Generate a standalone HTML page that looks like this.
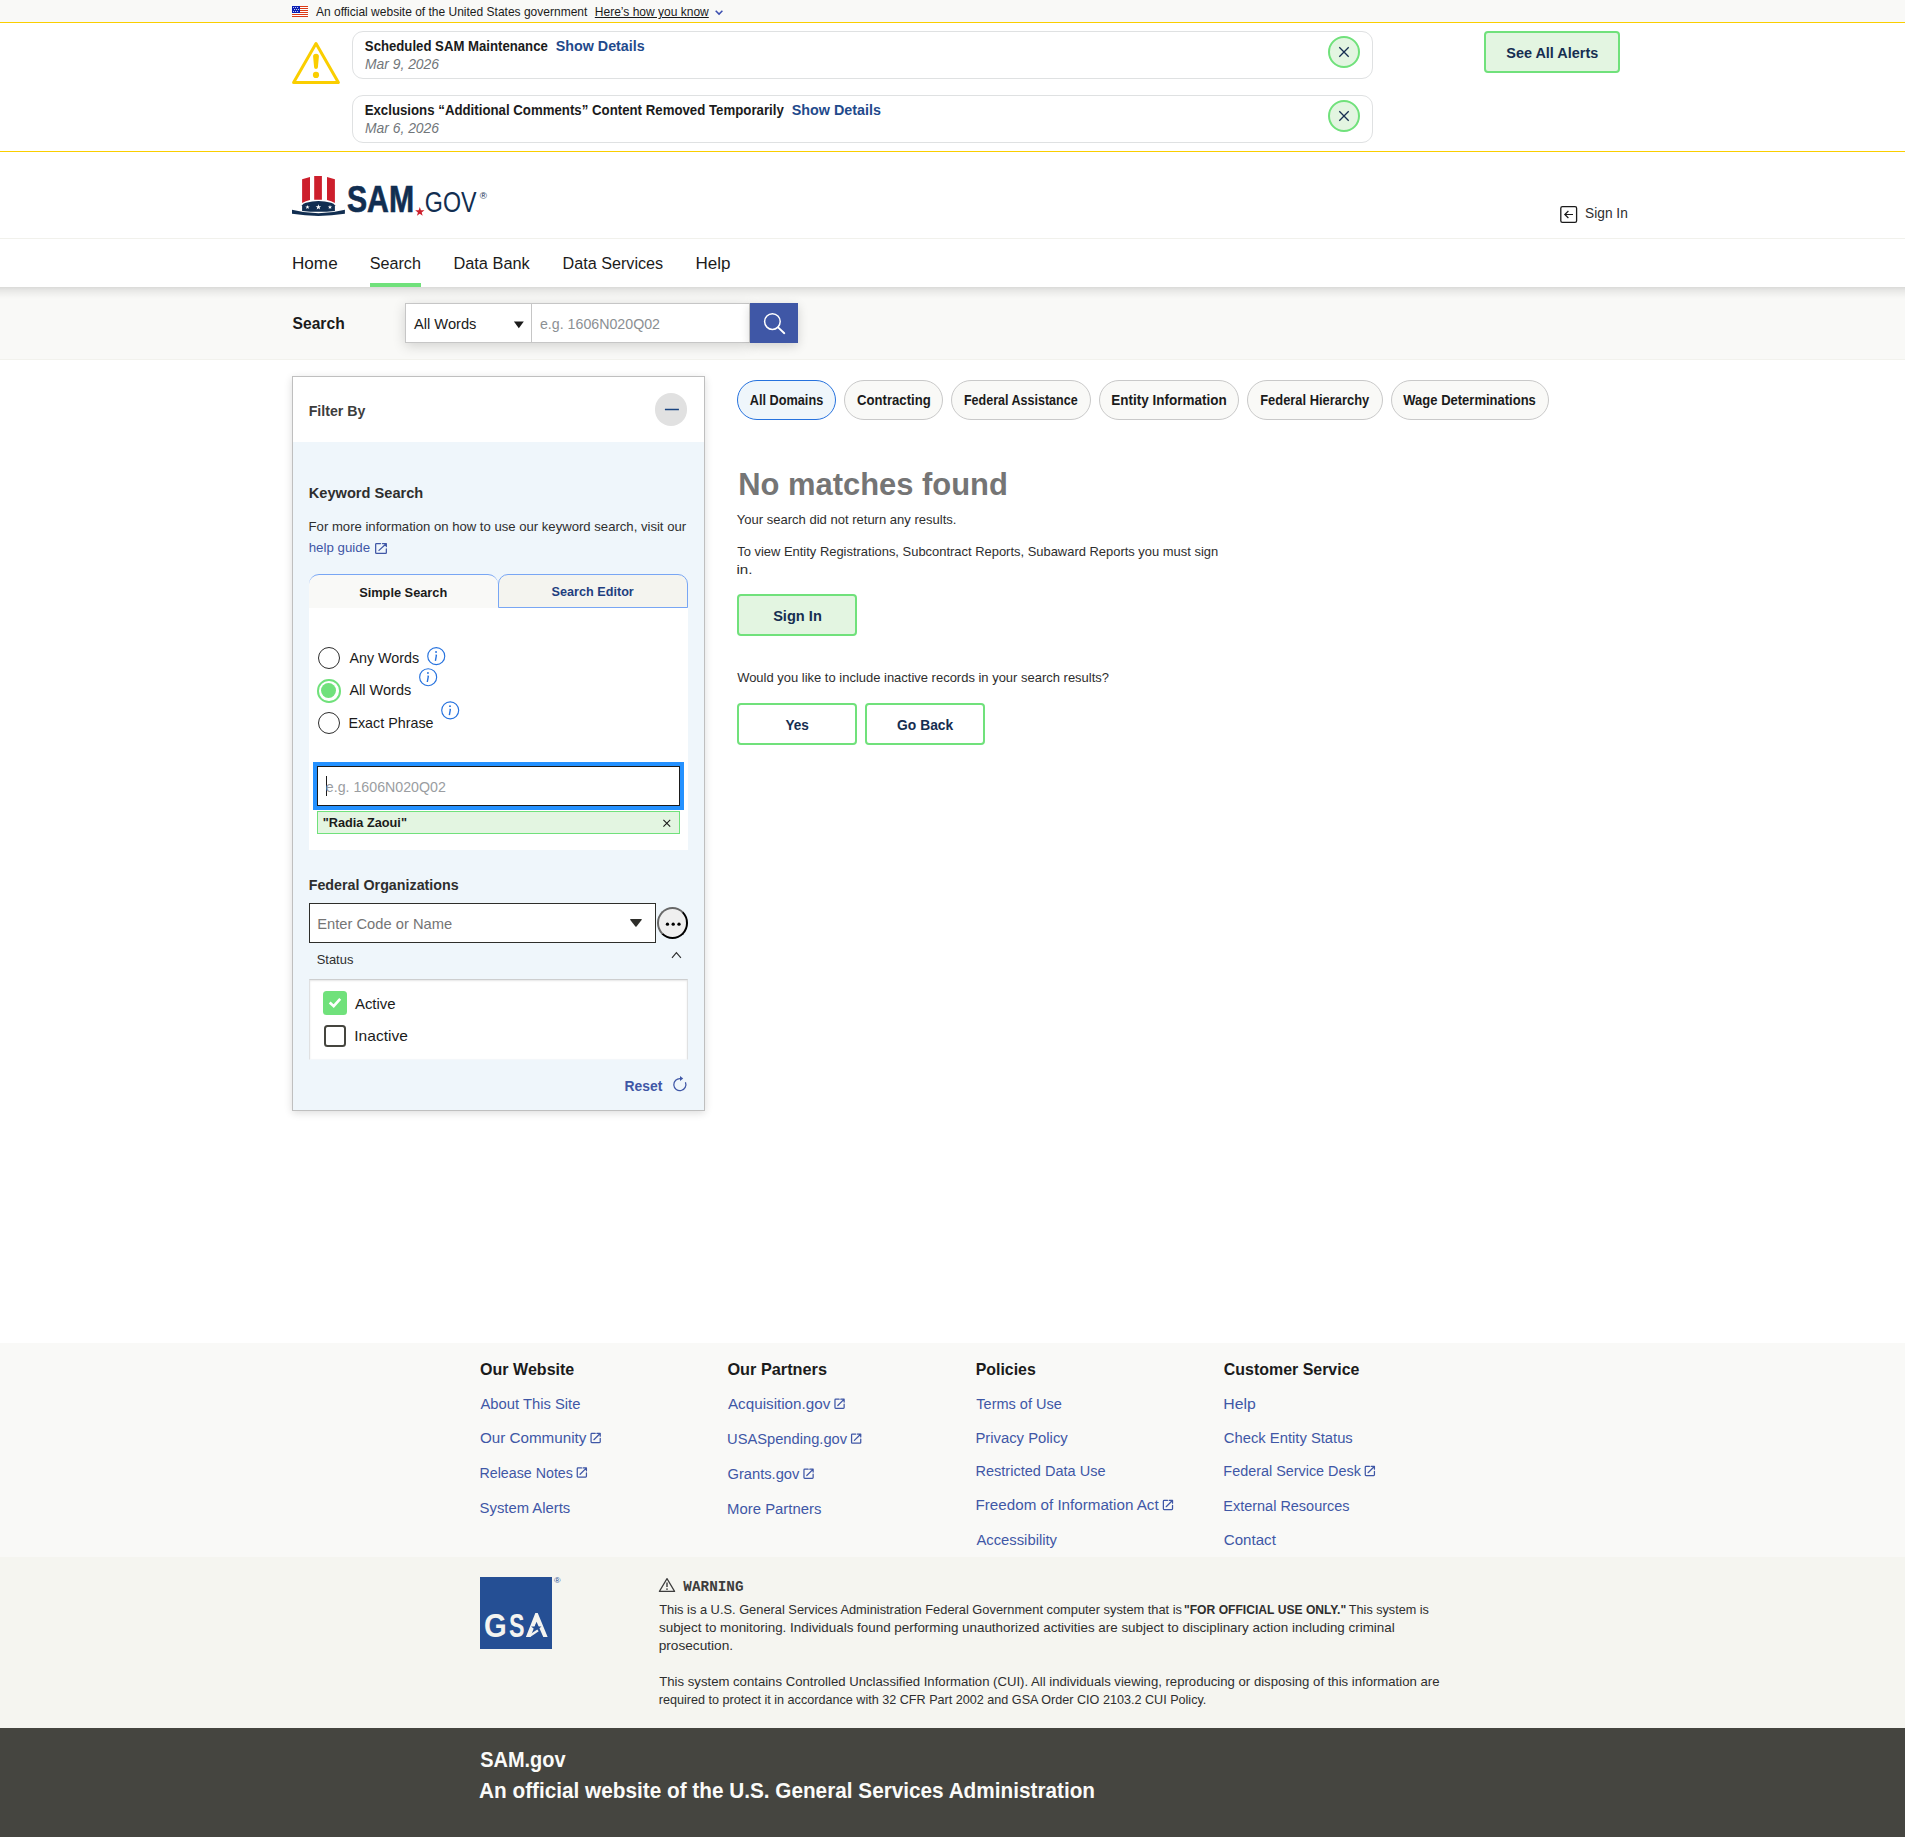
<!DOCTYPE html><html><head><meta charset="utf-8"><title>SAM.gov | Search</title><style>html,body{margin:0;padding:0}body{width:1905px;height:1837px;position:relative;overflow:hidden;background:#fff;font-family:"Liberation Sans",sans-serif;}div,svg{position:absolute;box-sizing:border-box}.t{position:absolute;white-space:nowrap;line-height:1;transform-origin:0 0;display:block;margin:0;padding:0;font-weight:normal;text-decoration:none}</style></head><body>
<div style="left:0px;top:0px;width:1905px;height:22px;background:#f9f9f7"></div>
<div style="left:0px;top:22px;width:1905px;height:1px;background:#face00"></div>
<div style="left:0px;top:151px;width:1905px;height:1px;background:#face00"></div>
<div style="left:352px;top:31px;width:1021px;height:48px;border:1px solid #dfe1e2;border-radius:11px;background:#fff"></div>
<div style="left:1328px;top:36px;width:32px;height:32px;border:2px solid #70e17b;border-radius:50%;background:#e3f5e1"></div>
<div style="left:352px;top:95px;width:1021px;height:48px;border:1px solid #dfe1e2;border-radius:11px;background:#fff"></div>
<div style="left:1328px;top:100px;width:32px;height:32px;border:2px solid #70e17b;border-radius:50%;background:#e3f5e1"></div>
<div style="left:1484px;top:31px;width:136px;height:42px;border:2px solid #70e17b;border-radius:4px;background:#e3f5e1"></div>
<div style="left:0px;top:238px;width:1905px;height:1px;background:#f1f1ec"></div>
<div style="left:370px;top:283px;width:51px;height:4px;background:#70e17b"></div>
<div style="left:0px;top:287px;width:1905px;height:72px;background:linear-gradient(rgba(0,0,0,.125),rgba(0,0,0,.075) 3px,rgba(0,0,0,.035) 7px,rgba(0,0,0,.012) 10px,rgba(0,0,0,0) 13px),#f9f9f7"></div>
<div style="left:0px;top:359px;width:1905px;height:1px;background:#f2f2ed"></div>
<div style="left:405px;top:303px;width:345px;height:40px;background:#fff;border:1px solid #c6c6c6;box-shadow:0 3px 12px rgba(0,0,0,.16)"></div>
<div style="left:531px;top:303px;width:1px;height:40px;background:#c6c6c6"></div>
<div style="left:750px;top:303px;width:48px;height:40px;background:#3f57a6;box-shadow:0 3px 10px rgba(0,0,0,.16)"></div>
<div style="left:292px;top:376px;width:413px;height:735px;border:1px solid #bfbfbf;background:#eff6fb;box-shadow:0 2px 8px rgba(0,0,0,.14)"></div>
<div style="left:293px;top:377px;width:411px;height:65px;background:#fff"></div>
<div style="left:654.7px;top:393.1px;width:32.6px;height:32.6px;border-radius:50%;background:#e1e1e1"></div>
<div style="left:309px;top:574px;width:189px;height:34px;background:#f9f9f7;border-top:1px solid #78a6f4;border-radius:10px 10px 0 0"></div>
<div style="left:498px;top:574px;width:190px;height:34px;background:#f4f4ef;border:1px solid #78a6f4;border-radius:10px 10px 0 0"></div>
<div style="left:309px;top:608px;width:379px;height:242px;background:#fff"></div>
<div style="left:318px;top:646.7px;width:22px;height:22px;border:1.5px solid #2e2e2e;border-radius:50%;background:#fff"></div>
<div style="left:317.2px;top:679px;width:23.5px;height:23.5px;border:2px solid #70e17b;border-radius:50%;background:#fff"></div>
<div style="left:321.4px;top:683.2px;width:15.1px;height:15.1px;border-radius:50%;background:#70e17b"></div>
<div style="left:318px;top:712.3px;width:22px;height:22px;border:1.5px solid #2e2e2e;border-radius:50%;background:#fff"></div>
<div style="left:313px;top:762px;width:371px;height:48px;background:#2491ff"></div>
<div style="left:317px;top:766px;width:363px;height:40px;background:#fff;border:1px solid #1b1b1b"></div>
<div style="left:326px;top:776px;width:1px;height:20px;background:#1b1b1b"></div>
<div style="left:317px;top:811px;width:363px;height:23px;background:#e3f5e1;border:1px solid #70e17b"></div>
<div style="left:309px;top:903px;width:347px;height:40px;background:#fff;border:1px solid #2e2e2a"></div>
<div style="left:657px;top:907px;width:31px;height:32px;border:2px solid;border-color:#686868 #000 #000 #686868;border-radius:50%;background:#efefef"></div>
<div style="left:309px;top:979px;width:379px;height:81px;background:#fff;border:1px solid #e0e1e2;border-top-color:#cdcecf;border-bottom-color:#f4f7fa;box-shadow:inset 0 1px 2px rgba(0,0,0,.10)"></div>
<div style="left:323px;top:991px;width:24px;height:24px;background:#70e17b;border-radius:3.5px"></div>
<div style="left:324px;top:1025px;width:22px;height:22px;border:2px solid #45453f;border-radius:3.5px;background:#fff"></div>
<div style="left:737px;top:380px;width:99px;height:40px;border:1px solid #2672de;border-radius:20px;background:#eff6fb"></div>
<div style="left:844px;top:380px;width:99px;height:40px;border:1px solid #c9c9c9;border-radius:20px;background:#f9f9f7"></div>
<div style="left:951px;top:380px;width:140px;height:40px;border:1px solid #c9c9c9;border-radius:20px;background:#f9f9f7"></div>
<div style="left:1099px;top:380px;width:140px;height:40px;border:1px solid #c9c9c9;border-radius:20px;background:#f9f9f7"></div>
<div style="left:1247.2px;top:380px;width:135.8px;height:40px;border:1px solid #c9c9c9;border-radius:20px;background:#f9f9f7"></div>
<div style="left:1391.2px;top:380px;width:157.8px;height:40px;border:1px solid #c9c9c9;border-radius:20px;background:#f9f9f7"></div>
<div style="left:737px;top:594px;width:120px;height:42px;border:2px solid #70e17b;border-radius:4px;background:#e3f5e1"></div>
<div style="left:737px;top:703px;width:120px;height:42px;border:2px solid #70e17b;border-radius:4px;background:#fff"></div>
<div style="left:865px;top:703px;width:120px;height:42px;border:2px solid #70e17b;border-radius:4px;background:#fff"></div>
<div style="left:0px;top:1343px;width:1905px;height:214px;background:#f9f9f7"></div>
<div style="left:0px;top:1557px;width:1905px;height:171px;background:#f5f5f0"></div>
<div style="left:0px;top:1728px;width:1905px;height:109px;background:#454540"></div>
<div style="left:480px;top:1577px;width:72.2px;height:72px;background:#254f94"></div>
<svg width="1905" height="1837" viewBox="0 0 1905 1837" style="left:0;top:0;overflow:visible"><rect x="292" y="6" width="16" height="11" fill="#fff"/><rect x="292" y="6" width="16" height="1" fill="#db3a16"/><rect x="292" y="8" width="16" height="1" fill="#db3a16"/><rect x="292" y="10" width="16" height="1" fill="#db3a16"/><rect x="292" y="12" width="16" height="1" fill="#db3a16"/><rect x="292" y="14" width="16" height="1" fill="#db3a16"/><rect x="292" y="16" width="16" height="1" fill="#db3a16"/><rect x="292" y="6" width="8" height="7" fill="#0b1fb4"/><circle cx="293.6" cy="7.5" r="0.55" fill="#fff"/><circle cx="295.6" cy="7.5" r="0.55" fill="#fff"/><circle cx="297.6" cy="7.5" r="0.55" fill="#fff"/><circle cx="294.6" cy="9.45" r="0.55" fill="#fff"/><circle cx="296.6" cy="9.45" r="0.55" fill="#fff"/><circle cx="298.6" cy="9.45" r="0.55" fill="#fff"/><circle cx="293.6" cy="11.45" r="0.55" fill="#fff"/><circle cx="295.6" cy="11.45" r="0.55" fill="#fff"/><circle cx="297.6" cy="11.45" r="0.55" fill="#fff"/><path d="M715.7,10.7 L719.05,14.1 L722.4,10.7" fill="none" stroke="#3c4fb0" stroke-width="1.5"/><path d="M316,43.5 L338.4,82.4 H293.6 Z" fill="none" stroke="#face00" stroke-width="3" stroke-linejoin="round"/><path d="M313.1,56.6 Q313.1,53.8 316,53.8 Q318.9,53.8 318.9,56.6 L317.9,67.3 Q317.8,69.1 316,69.1 Q314.2,69.1 314.1,67.3 Z" fill="#face00"/><circle cx="316" cy="74.9" r="3.1" fill="#face00"/><path d="M1339.3,47.3 L1348.7,56.7 M1348.7,47.3 L1339.3,56.7" stroke="#162e51" stroke-width="1.3" fill="none"/><path d="M1339.3,111.3 L1348.7,120.7 M1348.7,111.3 L1339.3,120.7" stroke="#162e51" stroke-width="1.3" fill="none"/><path d="M302.1,179.3 L310,176.9 V199.9 Q305.6,201 302.1,203.1 Z" fill="#cd1f2c"/><path d="M314.2,176 H321.9 V199.8 Q318.05,199.5 314.2,199.8 Z" fill="#cd1f2c"/><path d="M327,176.9 L334.9,179.3 V203.1 Q331.4,201 327,199.9 Z" fill="#cd1f2c"/><path d="M302.1,205.2 Q303,203.8 306,202.8 Q318.5,199.4 331,202.8 Q334,203.8 334.9,205.2 V210.9 Q318.5,212.8 302.1,210.9 Z" fill="#112e51"/><polygon points="307.50,204.90 308.04,206.46 309.69,206.49 308.37,207.48 308.85,209.06 307.50,208.12 306.15,209.06 306.63,207.48 305.31,206.49 306.96,206.46" fill="#fff"/><polygon points="318.40,204.20 319.08,206.16 321.16,206.20 319.50,207.46 320.10,209.45 318.40,208.26 316.70,209.45 317.30,207.46 315.64,206.20 317.72,206.16" fill="#fff"/><polygon points="330.00,204.90 330.54,206.46 332.19,206.49 330.87,207.48 331.35,209.06 330.00,208.12 328.65,209.06 329.13,207.48 327.81,206.49 329.46,206.46" fill="#fff"/><path d="M292,209.8 Q318.4,216.8 344.9,209.8 V213.8 Q318.4,218 292,213.8 Z" fill="#112e51"/><polygon points="419.80,206.90 420.95,210.21 424.46,210.29 421.66,212.41 422.68,215.76 419.80,213.76 416.92,215.76 417.94,212.41 415.14,210.29 418.65,210.21" fill="#cd1f2c"/><rect x="1560.8" y="206.7" width="15.8" height="15.6" rx="1.6" fill="none" stroke="#1b1b1b" stroke-width="1.3"/><path d="M1573,214.5 H1565 M1568.4,211 L1564.8,214.5 L1568.4,218" fill="none" stroke="#1b1b1b" stroke-width="1.2"/><path d="M513.9,321.6 H523.8 L518.85,328.2 Z" fill="#1b1b1b"/><circle cx="772.4" cy="321.6" r="7.8" fill="none" stroke="#fff" stroke-width="1.5"/><path d="M778.1,327.4 L784.3,333.2" stroke="#fff" stroke-width="1.9" stroke-linecap="round"/><path d="M664.9,409.5 H678.9" stroke="#1a4480" stroke-width="1.5"/><path d="M380.52,543.52 H376.56 Q375.66,543.52 375.66,544.36 V552.64 Q375.66,553.48 376.56,553.48 H385.44 Q386.34,553.48 386.34,552.64 V548.95" fill="none" stroke="#3f57a6" stroke-width="1.25" stroke-linecap="round"/><path d="M382.44,543.52 H386.34 V546.60 M386.16,543.68 L378.96,550.40" fill="none" stroke="#3f57a6" stroke-width="1.25" stroke-linecap="round" stroke-linejoin="round"/><circle cx="436.25" cy="656.15" r="8.5" fill="none" stroke="#2672de" stroke-width="1.15"/><path d="M435.55,655.25 H436.40 L435.40,660.95" stroke="#2672de" stroke-width="1.4" fill="none" stroke-linejoin="round"/><circle cx="436.05" cy="652.00" r="0.95" fill="#2672de"/><circle cx="428.15" cy="677.2" r="8.5" fill="none" stroke="#2672de" stroke-width="1.15"/><path d="M427.45,676.30 H428.30 L427.30,682.00" stroke="#2672de" stroke-width="1.4" fill="none" stroke-linejoin="round"/><circle cx="427.95" cy="673.05" r="0.95" fill="#2672de"/><circle cx="450.2" cy="710.3" r="8.5" fill="none" stroke="#2672de" stroke-width="1.15"/><path d="M449.50,709.40 H450.35 L449.35,715.10" stroke="#2672de" stroke-width="1.4" fill="none" stroke-linejoin="round"/><circle cx="450.00" cy="706.15" r="0.95" fill="#2672de"/><path d="M663.4,819.9 L670.2,826.6 M670.2,819.9 L663.4,826.6" stroke="#1b1b1b" stroke-width="1.1" fill="none"/><path d="M630.7,919.1 H641.2 Q642.2,919.2 641.6,920.1 L636.5,926.4 Q635.95,926.9 635.4,926.4 L630.3,920.1 Q629.7,919.2 630.7,919.1 Z" fill="#2e2e2a"/><circle cx="667.45" cy="924.2" r="1.65" fill="#000"/><circle cx="673.2" cy="924.2" r="1.65" fill="#000"/><circle cx="679.0" cy="924.2" r="1.65" fill="#000"/><path d="M672.0,957.8 L676.4,952.6 L680.9,957.8" fill="none" stroke="#2e2e2e" stroke-width="1.15"/><path d="M329.7,1002.6 L333.7,1006.2 L340.2,998.9" fill="none" stroke="#fff" stroke-width="2.7"/><path d="M685.46,1082.33 A6.05,6.05 0 1 1 680.48,1078.58" fill="none" stroke="#3f57a6" stroke-width="1.25"/><path d="M680,1075.9 L683.2,1078.4 L680,1080.9 Z" fill="#3f57a6"/><path d="M595.24,1433.37 H591.84 Q591.07,1433.37 591.07,1434.14 V1441.76 Q591.07,1442.53 591.84,1442.53 H599.46 Q600.23,1442.53 600.23,1441.76 V1438.36" fill="none" stroke="#3f57a6" stroke-width="1.25" stroke-linecap="round"/><path d="M596.89,1433.37 H600.23 V1436.20 M600.08,1433.52 L593.90,1439.70" fill="none" stroke="#3f57a6" stroke-width="1.25" stroke-linecap="round" stroke-linejoin="round"/><path d="M581.44,1467.97 H578.04 Q577.27,1467.97 577.27,1468.74 V1476.36 Q577.27,1477.13 578.04,1477.13 H585.66 Q586.43,1477.13 586.43,1476.36 V1472.96" fill="none" stroke="#3f57a6" stroke-width="1.25" stroke-linecap="round"/><path d="M583.09,1467.97 H586.43 V1470.80 M586.28,1468.12 L580.10,1474.30" fill="none" stroke="#3f57a6" stroke-width="1.25" stroke-linecap="round" stroke-linejoin="round"/><path d="M839.14,1399.17 H835.74 Q834.97,1399.17 834.97,1399.94 V1407.56 Q834.97,1408.33 835.74,1408.33 H843.36 Q844.13,1408.33 844.13,1407.56 V1404.16" fill="none" stroke="#3f57a6" stroke-width="1.25" stroke-linecap="round"/><path d="M840.79,1399.17 H844.13 V1402.00 M843.98,1399.32 L837.80,1405.50" fill="none" stroke="#3f57a6" stroke-width="1.25" stroke-linecap="round" stroke-linejoin="round"/><path d="M855.74,1434.07 H852.34 Q851.57,1434.07 851.57,1434.84 V1442.46 Q851.57,1443.23 852.34,1443.23 H859.96 Q860.73,1443.23 860.73,1442.46 V1439.06" fill="none" stroke="#3f57a6" stroke-width="1.25" stroke-linecap="round"/><path d="M857.39,1434.07 H860.73 V1436.90 M860.58,1434.22 L854.40,1440.40" fill="none" stroke="#3f57a6" stroke-width="1.25" stroke-linecap="round" stroke-linejoin="round"/><path d="M808.14,1469.17 H804.74 Q803.97,1469.17 803.97,1469.94 V1477.56 Q803.97,1478.33 804.74,1478.33 H812.36 Q813.13,1478.33 813.13,1477.56 V1474.16" fill="none" stroke="#3f57a6" stroke-width="1.25" stroke-linecap="round"/><path d="M809.79,1469.17 H813.13 V1472.00 M812.98,1469.32 L806.80,1475.50" fill="none" stroke="#3f57a6" stroke-width="1.25" stroke-linecap="round" stroke-linejoin="round"/><path d="M1167.54,1500.37 H1164.14 Q1163.37,1500.37 1163.37,1501.14 V1508.76 Q1163.37,1509.53 1164.14,1509.53 H1171.76 Q1172.53,1509.53 1172.53,1508.76 V1505.36" fill="none" stroke="#3f57a6" stroke-width="1.25" stroke-linecap="round"/><path d="M1169.19,1500.37 H1172.53 V1503.20 M1172.38,1500.52 L1166.20,1506.70" fill="none" stroke="#3f57a6" stroke-width="1.25" stroke-linecap="round" stroke-linejoin="round"/><path d="M1369.44,1466.37 H1366.04 Q1365.27,1466.37 1365.27,1467.14 V1474.76 Q1365.27,1475.53 1366.04,1475.53 H1373.66 Q1374.43,1475.53 1374.43,1474.76 V1471.36" fill="none" stroke="#3f57a6" stroke-width="1.25" stroke-linecap="round"/><path d="M1371.09,1466.37 H1374.43 V1469.20 M1374.28,1466.52 L1368.10,1472.70" fill="none" stroke="#3f57a6" stroke-width="1.25" stroke-linecap="round" stroke-linejoin="round"/><path d="M535.33,1613.05 H537.75 L547.65,1636.95 H543.3 L536.54,1621.7 L530.26,1636.95 H525.9 Z" fill="#f4f4f0"/><polygon points="536.30,1622.80 537.59,1626.52 541.53,1626.60 538.39,1628.98 539.53,1632.75 536.30,1630.50 533.07,1632.75 534.21,1628.98 531.07,1626.60 535.01,1626.52" fill="#254f94"/><path d="M525.9,1636.95 H530.26 L538.7,1631.2 L537.3,1629.5 Z" fill="#f4f4f0"/><path d="M667,1578.6 L674.6,1591.4 H659.4 Z" fill="none" stroke="#3d3d3d" stroke-width="1.2" stroke-linejoin="round"/><path d="M667,1582.6 V1587" stroke="#3d3d3d" stroke-width="1.4"/><circle cx="667" cy="1589.1" r="0.85" fill="#3d3d3d"/></svg>
<span class="t" style="left:315px;top:6px;font-size:12.95px;color:#1b1b1b;transform:translateX(0.95px) scaleX(0.9279)">An official website of the United States government</span>
<a class="t" style="left:594px;top:6px;font-size:12.95px;color:#1b1b1b;text-decoration:underline;transform:translateX(0.82px) scaleX(0.9284)">Here’s how you know</a>
<span class="t" style="left:364px;top:40px;font-size:13.88px;color:#1b1b1b;font-weight:bold;transform:translateX(0.84px) scaleX(0.9493)">Scheduled SAM Maintenance</span>
<a class="t" style="left:555px;top:40px;font-size:13.88px;color:#1f4a8c;font-weight:bold;transform:translateX(0.74px) scaleX(1.0304)">Show Details</a>
<span class="t" style="left:364px;top:58px;font-size:13.88px;color:#71767a;font-style:italic;transform:translateX(0.99px) scaleX(0.9998)">Mar 9, 2026</span>
<span class="t" style="left:364px;top:104px;font-size:13.88px;color:#1b1b1b;font-weight:bold;transform:translateX(0.66px) scaleX(0.9544)">Exclusions “Additional Comments” Content Removed Temporarily</span>
<a class="t" style="left:791px;top:104px;font-size:13.88px;color:#1f4a8c;font-weight:bold;transform:translateX(0.75px) scaleX(1.0339)">Show Details</a>
<span class="t" style="left:364px;top:122px;font-size:13.88px;color:#71767a;font-style:italic;transform:translateX(0.99px) scaleX(0.9998)">Mar 6, 2026</span>
<span class="t" style="left:1506px;top:46px;font-size:14.8px;color:#162e51;font-weight:bold;transform:translateX(0.27px) scaleX(0.9754)">See All Alerts</span>
<span class="t" style="left:346px;top:182px;font-size:36.9px;color:#112e51;font-weight:bold;-webkit-text-stroke:0.7px #112e51;transform:translateX(0.98px) scaleX(0.8176)">SAM</span>
<span class="t" style="left:424px;top:188px;font-size:28.7px;color:#112e51;transform:translateX(0.86px) scaleX(0.8102)">GOV</span>
<span class="t" style="left:479px;top:191px;font-size:9.5px;color:#112e51;transform:translateX(0.72px) scaleX(1.0294)">®</span>
<span class="t" style="left:1585px;top:205px;font-size:15.17px;color:#2e2e2e;transform:translateX(0.07px) scaleX(0.9047)">Sign In</span>
<a class="t" style="left:291px;top:256px;font-size:16.93px;color:#1b1b1b;transform:translateX(0.98px) scaleX(1.0119)">Home</a>
<a class="t" style="left:369px;top:256px;font-size:16.93px;color:#1b1b1b;transform:translateX(0.71px) scaleX(0.9546)">Search</a>
<a class="t" style="left:453px;top:256px;font-size:16.93px;color:#1b1b1b;transform:translateX(0.41px) scaleX(0.9665)">Data Bank</a>
<a class="t" style="left:562px;top:256px;font-size:16.93px;color:#1b1b1b;transform:translateX(0.44px) scaleX(0.9565)">Data Services</a>
<a class="t" style="left:695px;top:256px;font-size:16.93px;color:#1b1b1b;transform:translateX(0.38px) scaleX(1.0072)">Help</a>
<span class="t" style="left:292px;top:316px;font-size:16.93px;color:#1b1b1b;font-weight:bold;transform:translateX(0.56px) scaleX(0.9233)">Search</span>
<span class="t" style="left:413px;top:316px;font-size:14.98px;color:#1b1b1b;transform:translateX(0.98px) scaleX(0.9794)">All Words</span>
<span class="t" style="left:539px;top:316px;font-size:14.98px;color:#8b8f93;transform:translateX(0.97px) scaleX(0.9488)">e.g. 1606N020Q02</span>
<h2 class="t" style="left:308px;top:404px;font-size:14.06px;color:#3d3d3d;font-weight:bold;transform:translateX(0.69px) scaleX(1.0094)">Filter By</h2>
<h3 class="t" style="left:308px;top:487px;font-size:13.88px;color:#2e2e2e;font-weight:bold;transform:translateX(0.79px) scaleX(1.0526)">Keyword Search</h3>
<span class="t" style="left:308px;top:521px;font-size:12.95px;color:#2e2e2e;transform:translateX(0.60px) scaleX(1.0135)">For more information on how to use our keyword search, visit our</span>
<a class="t" style="left:308px;top:542px;font-size:12.95px;color:#3f57a6;transform:translateX(0.72px) scaleX(1.0282)">help guide</a>
<span class="t" style="left:359px;top:586px;font-size:13.23px;color:#1b1b1b;font-weight:bold;transform:translateX(0.15px) scaleX(0.9671)">Simple Search</span>
<span class="t" style="left:551px;top:585px;font-size:13.23px;color:#1f3f7f;font-weight:bold;transform:translateX(0.62px) scaleX(0.9558)">Search Editor</span>
<span class="t" style="left:349px;top:650px;font-size:14.98px;color:#1b1b1b;transform:translateX(0.41px) scaleX(0.9563)">Any Words</span>
<span class="t" style="left:349px;top:682px;font-size:14.98px;color:#1b1b1b;transform:translateX(0.41px) scaleX(0.9691)">All Words</span>
<span class="t" style="left:348px;top:715px;font-size:14.98px;color:#1b1b1b;transform:translateX(0.38px) scaleX(0.9562)">Exact Phrase</span>
<span class="t" style="left:325px;top:779px;font-size:14.98px;color:#9a9da1;transform:translateX(0.80px) scaleX(0.9492)">e.g. 1606N020Q02</span>
<span class="t" style="left:322px;top:817px;font-size:12.95px;color:#1b1b1b;font-weight:bold;transform:translateX(0.69px) scaleX(0.9842)">&quot;Radia Zaoui&quot;</span>
<h3 class="t" style="left:308px;top:879px;font-size:13.88px;color:#2e2e2e;font-weight:bold;transform:translateX(0.67px) scaleX(1.0296)">Federal Organizations</h3>
<span class="t" style="left:317px;top:916px;font-size:14.98px;color:#757575;transform:translateX(0.24px) scaleX(0.9828)">Enter Code or Name</span>
<span class="t" style="left:316px;top:954px;font-size:12.95px;color:#2e2e2e;transform:translateX(0.71px) scaleX(0.9989)">Status</span>
<span class="t" style="left:354px;top:996px;font-size:14.98px;color:#1b1b1b;transform:translateX(0.89px) scaleX(1.0001)">Active</span>
<span class="t" style="left:354px;top:1028px;font-size:14.98px;color:#1b1b1b;transform:translateX(0.31px) scaleX(1.0370)">Inactive</span>
<span class="t" style="left:624px;top:1079px;font-size:14.8px;color:#3f57a6;font-weight:bold;transform:translateX(0.54px) scaleX(0.9388)">Reset</span>
<span class="t" style="left:749px;top:394px;font-size:13.88px;color:#1b1b1b;font-weight:bold;transform:translateX(0.85px) scaleX(0.9147)">All Domains</span>
<span class="t" style="left:856px;top:394px;font-size:13.88px;color:#1b1b1b;font-weight:bold;transform:translateX(0.99px) scaleX(0.9474)">Contracting</span>
<span class="t" style="left:963px;top:394px;font-size:13.88px;color:#1b1b1b;font-weight:bold;transform:translateX(0.88px) scaleX(0.9031)">Federal Assistance</span>
<span class="t" style="left:1111px;top:394px;font-size:13.88px;color:#1b1b1b;font-weight:bold;transform:translateX(0.17px) scaleX(0.9728)">Entity Information</span>
<span class="t" style="left:1260px;top:394px;font-size:13.88px;color:#1b1b1b;font-weight:bold;transform:translateX(0.22px) scaleX(0.9300)">Federal Hierarchy</span>
<span class="t" style="left:1403px;top:394px;font-size:13.88px;color:#1b1b1b;font-weight:bold;transform:translateX(0.31px) scaleX(0.9376)">Wage Determinations</span>
<h1 class="t" style="left:738px;top:469px;font-size:31.4px;color:#757575;font-weight:bold;transform:translateX(0.22px) scaleX(0.9848)">No matches found</h1>
<span class="t" style="left:736px;top:514px;font-size:12.95px;color:#2e2e2e;transform:translateX(0.81px) scaleX(1.0067)">Your search did not return any results.</span>
<span class="t" style="left:737px;top:546px;font-size:12.95px;color:#2e2e2e;transform:translateX(0.23px) scaleX(0.9997)">To view Entity Registrations, Subcontract Reports, Subaward Reports you must sign</span>
<span class="t" style="left:736px;top:564px;font-size:12.95px;color:#2e2e2e;transform:translateX(0.50px) scaleX(1.1695)">in.</span>
<span class="t" style="left:773px;top:608px;font-size:15.17px;color:#162e51;font-weight:bold;transform:translateX(0.13px) scaleX(0.9638)">Sign In</span>
<span class="t" style="left:737px;top:672px;font-size:12.95px;color:#2e2e2e;transform:translateX(0.13px) scaleX(1.0028)">Would you like to include inactive records in your search results?</span>
<span class="t" style="left:785px;top:717px;font-size:15.17px;color:#162e51;font-weight:bold;transform:translateX(0.43px) scaleX(0.8996)">Yes</span>
<span class="t" style="left:897px;top:717px;font-size:15.17px;color:#162e51;font-weight:bold;transform:translateX(0.10px) scaleX(0.9124)">Go Back</span>
<h3 class="t" style="left:480px;top:1362px;font-size:16.65px;color:#1b1b1b;font-weight:bold;transform:translateX(0.06px) scaleX(0.9643)">Our Website</h3>
<h3 class="t" style="left:727px;top:1362px;font-size:16.65px;color:#1b1b1b;font-weight:bold;transform:translateX(0.43px) scaleX(0.9787)">Our Partners</h3>
<h3 class="t" style="left:975px;top:1362px;font-size:16.65px;color:#1b1b1b;font-weight:bold;transform:translateX(0.66px) scaleX(0.9550)">Policies</h3>
<h3 class="t" style="left:1223px;top:1362px;font-size:16.65px;color:#1b1b1b;font-weight:bold;transform:translateX(0.80px) scaleX(0.9580)">Customer Service</h3>
<a class="t" style="left:480px;top:1396px;font-size:15.36px;color:#3f57a6;transform:translateX(0.46px) scaleX(0.9616)">About This Site</a>
<a class="t" style="left:479px;top:1430px;font-size:15.36px;color:#3f57a6;transform:translateX(0.92px) scaleX(0.9901)">Our Community</a>
<a class="t" style="left:479px;top:1465px;font-size:15.36px;color:#3f57a6;transform:translateX(0.48px) scaleX(0.9272)">Release Notes</a>
<a class="t" style="left:479px;top:1500px;font-size:15.36px;color:#3f57a6;transform:translateX(0.60px) scaleX(0.9656)">System Alerts</a>
<a class="t" style="left:727px;top:1396px;font-size:15.36px;color:#3f57a6;transform:translateX(0.95px) scaleX(0.9909)">Acquisition.gov</a>
<a class="t" style="left:727px;top:1431px;font-size:15.36px;color:#3f57a6;transform:translateX(0.06px) scaleX(0.9559)">USASpending.gov</a>
<a class="t" style="left:727px;top:1466px;font-size:15.36px;color:#3f57a6;transform:translateX(0.43px) scaleX(0.9582)">Grants.gov</a>
<a class="t" style="left:727px;top:1501px;font-size:15.36px;color:#3f57a6;transform:translateX(0.11px) scaleX(0.9688)">More Partners</a>
<a class="t" style="left:976px;top:1396px;font-size:15.36px;color:#3f57a6;transform:translateX(0.31px) scaleX(0.9451)">Terms of Use</a>
<a class="t" style="left:975px;top:1430px;font-size:15.36px;color:#3f57a6;transform:translateX(0.41px) scaleX(0.9656)">Privacy Policy</a>
<a class="t" style="left:975px;top:1463px;font-size:15.36px;color:#3f57a6;transform:translateX(0.45px) scaleX(0.9464)">Restricted Data Use</a>
<a class="t" style="left:975px;top:1497px;font-size:15.36px;color:#3f57a6;transform:translateX(0.51px) scaleX(0.9887)">Freedom of Information Act</a>
<a class="t" style="left:976px;top:1532px;font-size:15.36px;color:#3f57a6;transform:translateX(0.46px) scaleX(0.9627)">Accessibility</a>
<a class="t" style="left:1223px;top:1396px;font-size:15.36px;color:#3f57a6;transform:translateX(0.23px) scaleX(1.0279)">Help</a>
<a class="t" style="left:1223px;top:1430px;font-size:15.36px;color:#3f57a6;transform:translateX(0.84px) scaleX(0.9619)">Check Entity Status</a>
<a class="t" style="left:1223px;top:1463px;font-size:15.36px;color:#3f57a6;transform:translateX(0.35px) scaleX(0.9368)">Federal Service Desk</a>
<a class="t" style="left:1223px;top:1498px;font-size:15.36px;color:#3f57a6;transform:translateX(0.34px) scaleX(0.9412)">External Resources</a>
<a class="t" style="left:1223px;top:1532px;font-size:15.36px;color:#3f57a6;transform:translateX(0.81px) scaleX(0.9826)">Contact</a>
<span class="t" style="left:483px;top:1608px;font-size:34.1px;color:#f4f4f0;font-weight:bold;transform:translateX(0.91px) scaleX(0.8571)">G</span>
<span class="t" style="left:508px;top:1608px;font-size:34.1px;color:#f4f4f0;font-weight:bold;transform:translateX(0.96px) scaleX(0.6828)">S</span>
<span class="t" style="left:553px;top:1577px;font-size:7.6px;color:#254f94;transform:translateX(0.93px) scaleX(1.1687)">®</span>
<span class="t" style="left:683px;top:1580px;font-size:15.5px;color:#3d3d3d;font-weight:bold;font-family:'Liberation Mono',monospace;transform:translateX(0.37px) scaleX(0.9234)">WARNING</span>
<span class="t" style="left:659px;top:1604px;font-size:12.95px;color:#2e2e2e;transform:translateX(0.28px) scaleX(0.9918)">This is a U.S. General Services Administration Federal Government computer system that is</span>
<span class="t" style="left:1183px;top:1604px;font-size:12.95px;color:#2e2e2e;font-weight:bold;transform:translateX(0.98px) scaleX(0.9361)">&quot;FOR OFFICIAL USE ONLY.&quot;</span>
<span class="t" style="left:1348px;top:1604px;font-size:12.95px;color:#2e2e2e;transform:translateX(0.86px) scaleX(0.9759)">This system is</span>
<span class="t" style="left:659px;top:1622px;font-size:12.95px;color:#2e2e2e;transform:translateX(0.00px) scaleX(1.0354)">subject to monitoring. Individuals found performing unauthorized activities are subject to disciplinary action including criminal</span>
<span class="t" style="left:658px;top:1640px;font-size:12.95px;color:#2e2e2e;transform:translateX(0.63px) scaleX(1.0562)">prosecution.</span>
<span class="t" style="left:659px;top:1676px;font-size:12.95px;color:#2e2e2e;transform:translateX(0.28px) scaleX(1.0159)">This system contains Controlled Unclassified Information (CUI). All individuals viewing, reproducing or disposing of this information are</span>
<span class="t" style="left:658px;top:1694px;font-size:12.95px;color:#2e2e2e;transform:translateX(0.69px) scaleX(0.9743)">required to protect it in accordance with 32 CFR Part 2002 and GSA Order CIO 2103.2 CUI Policy.</span>
<span class="t" style="left:480px;top:1748px;font-size:22.76px;color:#fbfbf9;font-weight:bold;transform:translateX(0.19px) scaleX(0.8769)">SAM.gov</span>
<span class="t" style="left:479px;top:1779px;font-size:22.76px;color:#fbfbf9;font-weight:bold;transform:translateX(0.08px) scaleX(0.9118)">An official website of the U.S. General Services Administration</span>
</body></html>
